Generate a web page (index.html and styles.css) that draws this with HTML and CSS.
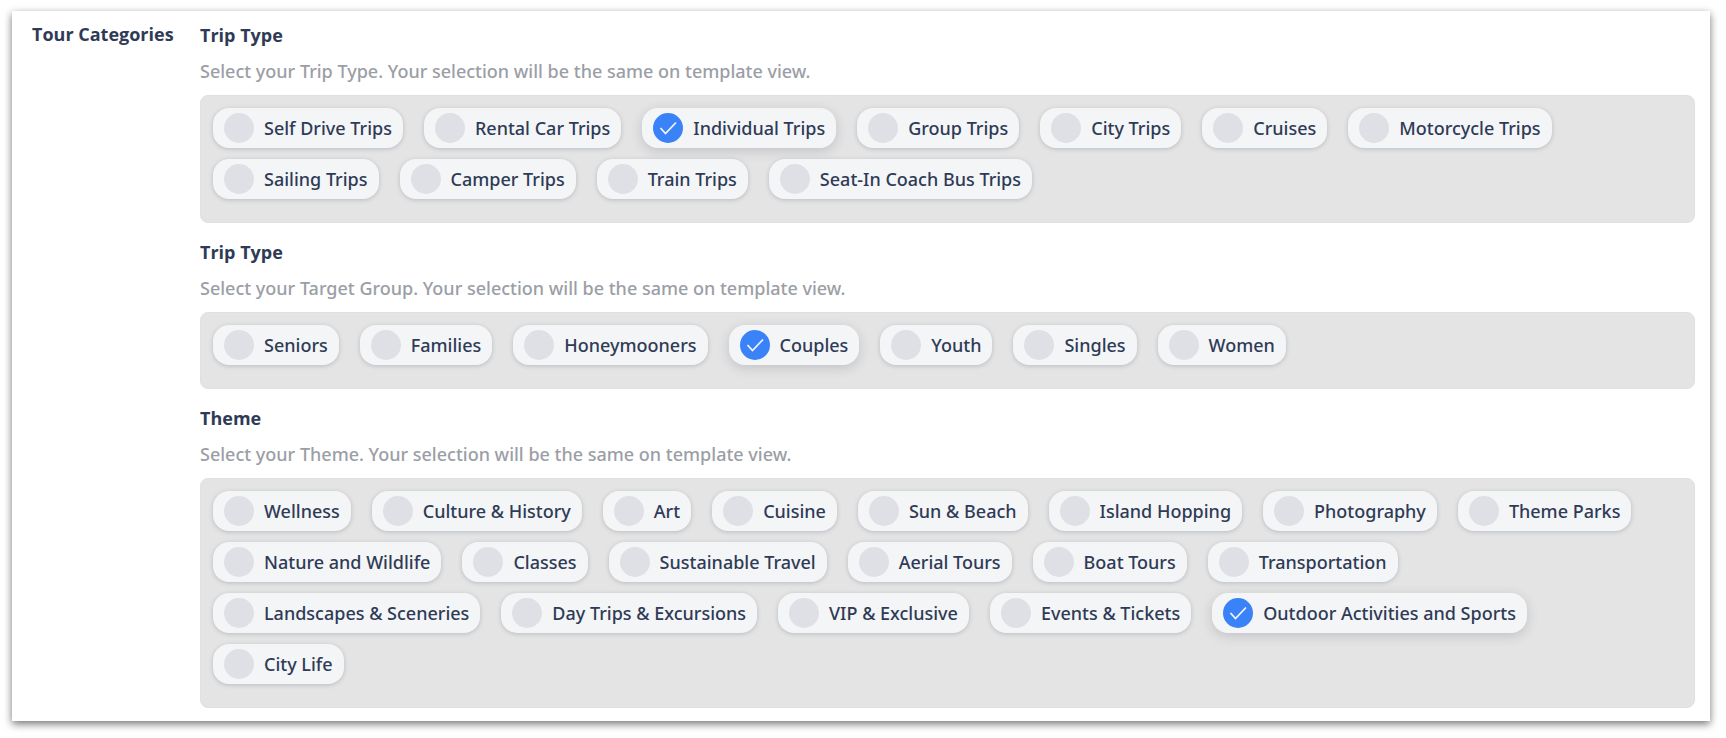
FILE: index.html
```html
<!DOCTYPE html>
<html lang="en">
  <head>
    <meta charset="utf-8">
    <title>Tour Categories</title>
    <link rel="stylesheet" href="styles.css">
  </head>
  <body>
    <form class="card">
      <h2 class="card-title">Tour Categories</h2>
      <div class="groups">
        <section class="group">
          <h3 class="group-title">Trip Type</h3>
          <p class="group-text">Select your Trip Type. Your selection will be the same on template view.</p>
          <div class="options">
            <label class="chip"><input type="checkbox" name="trip">Self Drive Trips</label>
            <label class="chip"><input type="checkbox" name="trip">Rental Car Trips</label>
            <label class="chip"><input type="checkbox" name="trip" checked>Individual Trips</label>
            <label class="chip"><input type="checkbox" name="trip">Group Trips</label>
            <label class="chip"><input type="checkbox" name="trip">City Trips</label>
            <label class="chip"><input type="checkbox" name="trip">Cruises</label>
            <label class="chip"><input type="checkbox" name="trip">Motorcycle Trips</label>
            <label class="chip"><input type="checkbox" name="trip">Sailing Trips</label>
            <label class="chip"><input type="checkbox" name="trip">Camper Trips</label>
            <label class="chip"><input type="checkbox" name="trip">Train Trips</label>
            <label class="chip"><input type="checkbox" name="trip">Seat-In Coach Bus Trips</label>
          </div>
        </section>
        <section class="group">
          <h3 class="group-title">Trip Type</h3>
          <p class="group-text">Select your Target Group. Your selection will be the same on template view.</p>
          <div class="options">
            <label class="chip"><input type="checkbox" name="target">Seniors</label>
            <label class="chip"><input type="checkbox" name="target">Families</label>
            <label class="chip"><input type="checkbox" name="target">Honeymooners</label>
            <label class="chip"><input type="checkbox" name="target" checked>Couples</label>
            <label class="chip"><input type="checkbox" name="target">Youth</label>
            <label class="chip"><input type="checkbox" name="target">Singles</label>
            <label class="chip"><input type="checkbox" name="target">Women</label>
          </div>
        </section>
        <section class="group">
          <h3 class="group-title">Theme</h3>
          <p class="group-text">Select your Theme. Your selection will be the same on template view.</p>
          <div class="options">
            <label class="chip"><input type="checkbox" name="theme">Wellness</label>
            <label class="chip"><input type="checkbox" name="theme">Culture &amp; History</label>
            <label class="chip"><input type="checkbox" name="theme">Art</label>
            <label class="chip"><input type="checkbox" name="theme">Cuisine</label>
            <label class="chip"><input type="checkbox" name="theme">Sun &amp; Beach</label>
            <label class="chip"><input type="checkbox" name="theme">Island Hopping</label>
            <label class="chip"><input type="checkbox" name="theme">Photography</label>
            <label class="chip"><input type="checkbox" name="theme">Theme Parks</label>
            <label class="chip"><input type="checkbox" name="theme">Nature and Wildlife</label>
            <label class="chip"><input type="checkbox" name="theme">Classes</label>
            <label class="chip"><input type="checkbox" name="theme">Sustainable Travel</label>
            <label class="chip"><input type="checkbox" name="theme">Aerial Tours</label>
            <label class="chip"><input type="checkbox" name="theme">Boat Tours</label>
            <label class="chip"><input type="checkbox" name="theme">Transportation</label>
            <label class="chip"><input type="checkbox" name="theme">Landscapes &amp; Sceneries</label>
            <label class="chip"><input type="checkbox" name="theme">Day Trips &amp; Excursions</label>
            <label class="chip"><input type="checkbox" name="theme">VIP &amp; Exclusive</label>
            <label class="chip"><input type="checkbox" name="theme">Events &amp; Tickets</label>
            <label class="chip"><input type="checkbox" name="theme" checked>Outdoor Activities and Sports</label>
            <label class="chip"><input type="checkbox" name="theme">City Life</label>
          </div>
        </section>
      </div>
    </form>
  </body>
</html>
```

FILE: styles.css
```css
* {
  box-sizing: border-box;
}
body {
  margin: 0;
  padding: 11px 16px 16px 12px;
  background: #fff;
  color: #2f3b56;
  font-family: "Noto Sans", "Open Sans", sans-serif;
  font-size: 18px;
  font-weight: 500;
  line-height: 24px;
}
.card {
  display: flex;
  padding: 12px 15px 13px 20px;
  background: #fff;
  box-shadow: 0 3px 8px rgba(0, 0, 0, 0.55);
}
.card-title,
.group-title {
  margin: 0;
  font-family: "Open Sans", "Noto Sans", sans-serif;
  font-size: 18px;
  font-weight: 700;
}
.card-title {
  flex: none;
  width: 168px;
  line-height: 22px;
}
.groups {
  flex: 1;
  min-width: 0;
  display: flex;
  flex-direction: column;
  gap: 17px;
}
.group-text {
  margin: 12px 0;
  color: #9b9ea6;
}
.options {
  display: flex;
  flex-wrap: wrap;
  padding: 12px;
  border: 1px solid #dfe0e6;
  border-radius: 8px;
  background: #e4e4e4;
}
.chip {
  display: flex;
  align-items: center;
  gap: 10px;
  height: 40px;
  margin: 0 21px 11px 0;
  padding: 0 11px;
  border-radius: 16px;
  background: #f4f5f7;
  box-shadow: 0 1px 4px rgba(60, 66, 90, 0.25);
  white-space: nowrap;
  cursor: pointer;
}
.chip:has(input:checked) {
  box-shadow: 0 3px 12px rgba(60, 66, 90, 0.2);
}
.chip input {
  appearance: none;
  flex: none;
  width: 30px;
  height: 30px;
  margin: 0;
  border-radius: 50%;
  background: #dfe0e6;
}
.chip input:checked {
  background: #3a82f8 url("data:image/svg+xml,%3Csvg xmlns='http://www.w3.org/2000/svg' viewBox='0 0 30 30'%3E%3Cpath d='M7.5 15l5 5.5L23 9.5' fill='none' stroke='%23f4f5f7' stroke-width='1.8'/%3E%3C/svg%3E");
}
```
